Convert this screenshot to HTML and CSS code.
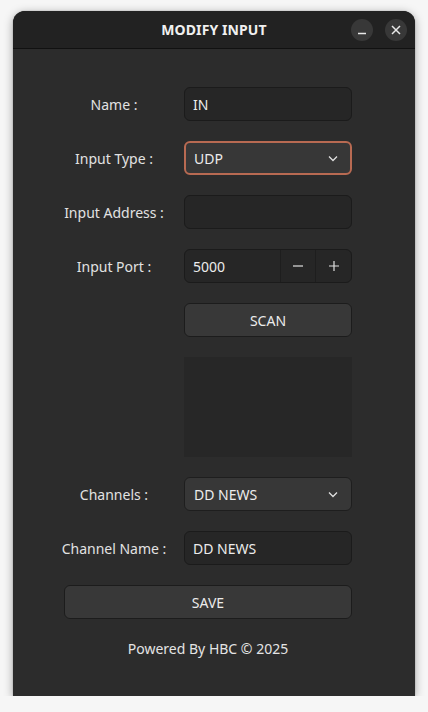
FILE: index.html
```html
<!DOCTYPE html>
<html>
<head>
<meta charset="utf-8">
<link rel="stylesheet" href="styles.css">
</head>
<body>
<div class="window">
  <header class="titlebar">
    <div class="title">MODIFY INPUT</div>
    <div class="controls">
      <button class="ctl" aria-label="minimize">
        <svg width="10" height="10" viewBox="0 0 10 10"><path d="M1 8.5H9" stroke="#e8e8e8" stroke-width="1.4"/></svg>
      </button>
      <button class="ctl" aria-label="close">
        <svg width="10" height="10" viewBox="0 0 10 10"><path d="M1 1L9 9M9 1L1 9" stroke="#e8e8e8" stroke-width="1.5"/></svg>
      </button>
    </div>
  </header>
  <main class="content">
    <div class="form">
      <label class="lbl">Name :</label>
      <div class="field entry">IN</div>

      <label class="lbl">Input Type :</label>
      <div class="field combo focus"><span>UDP</span>
        <svg width="12" height="12" viewBox="0 0 12 12"><path d="M2 4.5L6 8.5L10 4.5" fill="none" stroke="#e0e0e0" stroke-width="1.3"/></svg>
      </div>

      <label class="lbl">Input Address :</label>
      <div class="field entry"></div>

      <label class="lbl">Input Port :</label>
      <div class="field spin">
        <span class="spin-val">5000</span>
        <span class="spin-btn"><svg width="12" height="12" viewBox="0 0 12 12"><path d="M1 6H11" stroke="#e0e0e0" stroke-width="1.2"/></svg></span>
        <span class="spin-btn"><svg width="12" height="12" viewBox="0 0 12 12"><path d="M1 6H11M6 1V11" stroke="#e0e0e0" stroke-width="1.2"/></svg></span>
      </div>

      <span></span>
      <div class="field button">SCAN</div>

      <span></span>
      <div class="listbox"></div>

      <label class="lbl">Channels :</label>
      <div class="field combo"><span>DD NEWS</span>
        <svg width="12" height="12" viewBox="0 0 12 12"><path d="M2 4.5L6 8.5L10 4.5" fill="none" stroke="#e0e0e0" stroke-width="1.3"/></svg>
      </div>

      <label class="lbl">Channel Name :</label>
      <div class="field entry">DD NEWS</div>

      <div class="field button wide">SAVE</div>
    </div>
    <p class="footer">Powered By HBC © 2025</p>
  </main>
</div>
</body>
</html>
```

FILE: styles.css
```css
html, body {
  margin: 0;
  padding: 0;
}
body {
  background: #f6f6f6;
  font-family: "Noto Sans", "Open Sans", sans-serif;
  color: #e6e6e6;
}
.window {
  margin: 11px 0 0 13px;
  width: 402px;
  height: 685px;
  background: #2c2c2c;
  border-radius: 12px 12px 0 0;
  box-shadow: 0 2px 10px rgba(0,0,0,0.35), 0 0 1px rgba(0,0,0,0.5);
  overflow: hidden;
  display: flex;
  flex-direction: column;
}
.titlebar {
  height: 37px;
  background: #222222;
  border-bottom: 1px solid #111111;
  display: flex;
  align-items: center;
  justify-content: center;
  position: relative;
}
.title {
  font-weight: 700;
  font-size: 14px;
  letter-spacing: 0.1px;
  color: #f0f0f0;
}
.controls {
  position: absolute;
  right: 8px;
  top: 8px;
  display: flex;
  gap: 12px;
}
.ctl {
  width: 22px;
  height: 22px;
  border-radius: 50%;
  border: none;
  background: #383838;
  padding: 0;
  display: flex;
  align-items: center;
  justify-content: center;
}
.content {
  padding: 38px 63px 0 51px;
  display: flex;
  flex-direction: column;
}
.form {
  display: grid;
  grid-template-columns: 100px 168px;
  column-gap: 20px;
  row-gap: 20px;
  align-items: center;
}
.lbl {
  justify-self: center;
  text-align: center;
  font-size: 14px;
  color: #e2e2e2;
  white-space: nowrap;
}
.field {
  box-sizing: border-box;
  height: 34px;
  border-radius: 6px;
  border: 1px solid #1b1b1b;
  font-size: 14px;
  display: flex;
  align-items: center;
  color: #ececec;
}
.entry {
  background: #262626;
  padding: 0 8px;
}
.combo {
  background: #373737;
  padding: 0 12px 0 9px;
  justify-content: space-between;
  border-color: #1e1e1e;
}
.combo.focus {
  border: 2px solid #b86a52;
  padding-left: 8px;
  padding-right: 11px;
}
.spin {
  background: #262626;
  padding: 0;
}
.spin-val {
  flex: 1;
  padding-left: 8px;
}
.spin-btn {
  width: 34px;
  height: 100%;
  border-left: 1px solid #1e1e1e;
  display: flex;
  align-items: center;
  justify-content: center;
}
.spin-btn:last-child {
  width: 35px;
}
.button {
  background: #383838;
  justify-content: center;
  border-color: #1c1c1c;
}
.wide {
  grid-column: 1 / 3;
}
.listbox {
  height: 100px;
  background: #272727;
}
.footer {
  margin: 20px 0 0;
  text-align: center;
  font-size: 14px;
  color: #e4e4e4;
}
```
